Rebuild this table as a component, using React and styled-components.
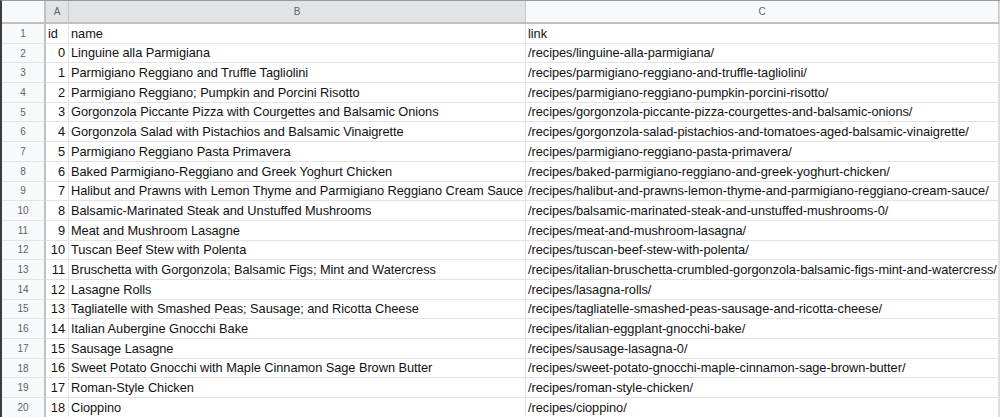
import React from 'react'
import styled, { createGlobalStyle } from 'styled-components'

const GlobalStyle = createGlobalStyle`
  html, body {
    margin: 0;
    padding: 0;
    background: #ffffff;
    overflow: hidden;
  }
`

const rows = [
  ['Linguine alla Parmigiana', '/recipes/linguine-alla-parmigiana/'],
  ['Parmigiano Reggiano and Truffle Tagliolini', '/recipes/parmigiano-reggiano-and-truffle-tagliolini/'],
  ['Parmigiano Reggiano; Pumpkin and Porcini Risotto', '/recipes/parmigiano-reggiano-pumpkin-porcini-risotto/'],
  ['Gorgonzola Piccante Pizza with Courgettes and Balsamic Onions', '/recipes/gorgonzola-piccante-pizza-courgettes-and-balsamic-onions/'],
  ['Gorgonzola Salad with Pistachios and Balsamic Vinaigrette', '/recipes/gorgonzola-salad-pistachios-and-tomatoes-aged-balsamic-vinaigrette/'],
  ['Parmigiano Reggiano Pasta Primavera', '/recipes/parmigiano-reggiano-pasta-primavera/'],
  ['Baked Parmigiano-Reggiano and Greek Yoghurt Chicken', '/recipes/baked-parmigiano-reggiano-and-greek-yoghurt-chicken/'],
  ['Halibut and Prawns with Lemon Thyme and Parmigiano Reggiano Cream Sauce', '/recipes/halibut-and-prawns-lemon-thyme-and-parmigiano-reggiano-cream-sauce/'],
  ['Balsamic-Marinated Steak and Unstuffed Mushrooms', '/recipes/balsamic-marinated-steak-and-unstuffed-mushrooms-0/'],
  ['Meat and Mushroom Lasagne', '/recipes/meat-and-mushroom-lasagna/'],
  ['Tuscan Beef Stew with Polenta', '/recipes/tuscan-beef-stew-with-polenta/'],
  ['Bruschetta with Gorgonzola; Balsamic Figs; Mint and Watercress', '/recipes/italian-bruschetta-crumbled-gorgonzola-balsamic-figs-mint-and-watercress/'],
  ['Lasagne Rolls', '/recipes/lasagna-rolls/'],
  ['Tagliatelle with Smashed Peas; Sausage; and Ricotta Cheese', '/recipes/tagliatelle-smashed-peas-sausage-and-ricotta-cheese/'],
  ['Italian Aubergine Gnocchi Bake', '/recipes/italian-eggplant-gnocchi-bake/'],
  ['Sausage Lasagne', '/recipes/sausage-lasagna-0/'],
  ['Sweet Potato Gnocchi with Maple Cinnamon Sage Brown Butter', '/recipes/sweet-potato-gnocchi-maple-cinnamon-sage-brown-butter/'],
  ['Roman-Style Chicken', '/recipes/roman-style-chicken/'],
  ['Cioppino', '/recipes/cioppino/']
]

const Sheet = styled.div`
  width: 1000px;
  height: 417px;
  overflow: hidden;
  display: grid;
  grid-template-columns: 44px 23px 457px 473px 3px;
  grid-template-rows: 23px repeat(20, 19.7px);
  border-left: 2px solid #3c3c3c;
  border-top: 1px solid #9a9a9a;
  box-sizing: border-box;
  font-family: "Liberation Sans", Arial, sans-serif;
`

const Corner = styled.div`
  background: #f8f9fa;
  border-right: 2px solid #c0c0c0;
  border-bottom: 2px solid #c0c0c0;
  box-sizing: border-box;
`

const ColHead = styled.div`
  background: ${props => (props.selected ? '#e1e3e6' : '#f8f9fa')};
  border-right: 1px solid #c4c7c5;
  border-bottom: 2px solid #c0c0c0;
  box-sizing: border-box;
  display: flex;
  align-items: center;
  justify-content: center;
  font-size: 10px;
  color: #5f6368;
`

const RowHead = styled.div`
  background: #f8f9fa;
  border-right: 2px solid #c0c0c0;
  border-bottom: 1px solid #e2e3e3;
  box-sizing: border-box;
  display: flex;
  align-items: center;
  justify-content: center;
  font-size: 10px;
  color: #5f6368;
`

const Cell = styled.div`
  border-right: 1px solid #e2e3e3;
  border-bottom: 1px solid #e2e3e3;
  box-sizing: border-box;
  display: flex;
  align-items: flex-end;
  justify-content: ${props => (props.numeric ? 'flex-end' : 'flex-start')};
  padding: 0 3px 2px 2px;
  font-size: 12.8px;
  letter-spacing: -0.05px;
  color: #111111;
  white-space: nowrap;
  overflow: hidden;
  line-height: 15px;
`

const Edge = styled.div`
  border-left: 1px solid #dadce0;
  border-bottom: ${props => (props.head ? '2px solid #c0c0c0' : 'none')};
  box-sizing: border-box;
  background: ${props => (props.head ? '#f8f9fa' : '#ffffff')};
`

export default function App () {
  return (
    <>
      <GlobalStyle />
      <Sheet>
        <Corner />
        <ColHead selected>A</ColHead>
        <ColHead selected>B</ColHead>
        <ColHead>C</ColHead>
        <Edge head />

        <RowHead>1</RowHead>
        <Cell>id</Cell>
        <Cell>name</Cell>
        <Cell>link</Cell>
        <Edge />

        {rows.map(([name, link], i) => (
          <React.Fragment key={i}>
            <RowHead>{i + 2}</RowHead>
            <Cell numeric>{i}</Cell>
            <Cell>{name}</Cell>
            <Cell>{link}</Cell>
            <Edge />
          </React.Fragment>
        ))}
      </Sheet>
    </>
  )
}
